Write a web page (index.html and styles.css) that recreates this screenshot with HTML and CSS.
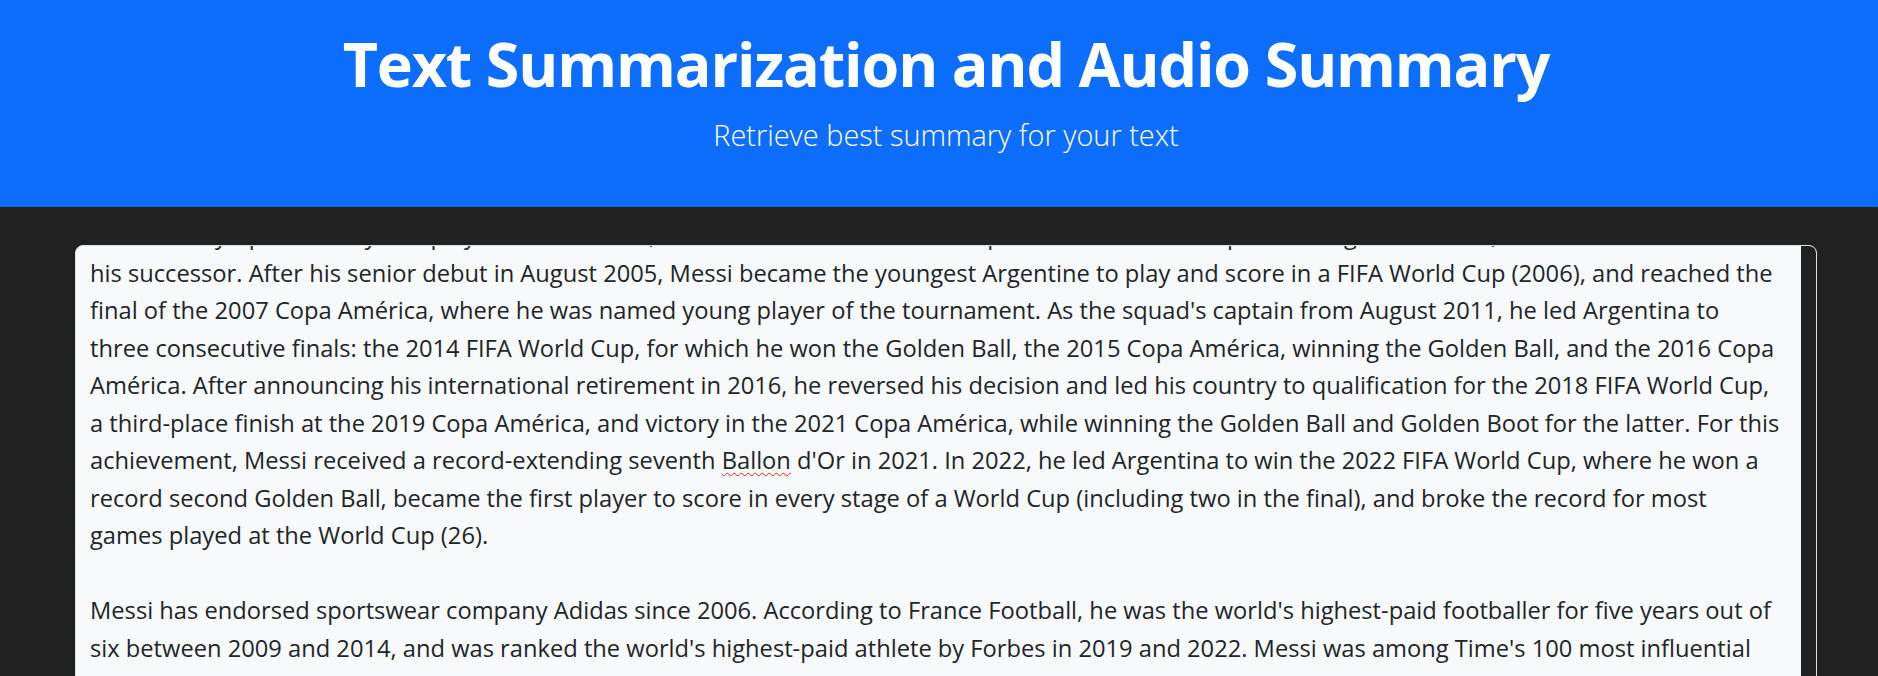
FILE: index.html
```html
<!DOCTYPE html>
<html lang="en">
<head>
<meta charset="utf-8">
<title>Text Summarization and Audio Summary</title>
<link rel="stylesheet" href="styles.css">
</head>
<body>
<header class="hero">
  <h1 class="hero-title">Text Summarization and Audio Summary</h1>
  <p class="hero-lead">Retrieve best summary for your text</p>
</header>
<main class="main">
  <div class="input-box">
    <div class="doc">
      <div class="doc-inner">
        <div class="ln">Summer Olympics. His style of play as a diminutive, left-footed dribbler drew comparisons with his compatriot Diego Maradona, who described Messi as</div>
        <div class="ln">his successor. After his senior debut in August 2005, Messi became the youngest Argentine to play and score in a FIFA World Cup (2006), and reached the</div>
        <div class="ln">final of the 2007 Copa América, where he was named young player of the tournament. As the squad's captain from August 2011, he led Argentina to</div>
        <div class="ln">three consecutive finals: the 2014 FIFA World Cup, for which he won the Golden Ball, the 2015 Copa América, winning the Golden Ball, and the 2016 Copa</div>
        <div class="ln">América. After announcing his international retirement in 2016, he reversed his decision and led his country to qualification for the 2018 FIFA World Cup,</div>
        <div class="ln">a third-place finish at the 2019 Copa América, and victory in the 2021 Copa América, while winning the Golden Ball and Golden Boot for the latter. For this</div>
        <div class="ln">achievement, Messi received a record-extending seventh <span class="misspelt">Ballon</span> d'Or in 2021. In 2022, he led Argentina to win the 2022 FIFA World Cup, where he won a</div>
        <div class="ln">record second Golden Ball, became the first player to score in every stage of a World Cup (including two in the final), and broke the record for most</div>
        <div class="ln">games played at the World Cup (26).</div>
        <div class="ln blank">&nbsp;</div>
        <div class="ln">Messi has endorsed sportswear company Adidas since 2006. According to France Football, he was the world's highest-paid footballer for five years out of</div>
        <div class="ln">six between 2009 and 2014, and was ranked the world's highest-paid athlete by Forbes in 2019 and 2022. Messi was among Time's 100 most influential</div>
        <div class="ln">people in the world in 2011, 2012, and 2023. In February 2020, he was awarded the Laureus World Sportsman of the Year, thus becoming the first</div>
        <div class="ln">footballer and the first team sport athlete to win the award. Later that year, Messi became the second footballer and second team-sport athlete</div>
      </div>
    </div>
    <div class="scrollbar"></div>
  </div>
</main>
</body>
</html>
```
FILE: styles.css
```css
html, body {
  margin: 0;
  padding: 0;
}
body {
  background: #212121;
  font-family: "Open Sans", "Noto Sans", sans-serif;
  color: #212529;
  overflow: hidden;
}
.hero {
  background: #0d6efd;
  height: 207px;
  box-sizing: border-box;
  padding: 33px 0 0 14px;
  text-align: center;
  color: #fff;
}
.hero-title {
  margin: 0;
  font-size: 61px;
  line-height: 61px;
  font-weight: 700;
  letter-spacing: -1.15px;
}
.hero-lead {
  margin: 24px 0 0;
  font-size: 28.9px;
  line-height: 1.2;
  font-weight: 300;
}
.main {
  padding: 38px 61px 0 75px;
}
.input-box {
  display: flex;
  height: 620px;
  background: #f8f9fa;
  border: 1px solid #dee2e6;
  border-radius: 8px;
  overflow: hidden;
}
.doc {
  flex: 1;
  overflow: hidden;
  padding: 0 0 0 14px;
}
.doc-inner {
  margin-top: -29px;
  font-size: 23.7px;
  line-height: 37.5px;
  color: #212529;
}
.ln {
  white-space: nowrap;
}
.misspelt {
  text-decoration: underline wavy #e0201c;
  text-decoration-thickness: 1px;
  text-underline-offset: 3px;
}
.scrollbar {
  width: 15px;
  flex: none;
  background: #212121;
}
```
